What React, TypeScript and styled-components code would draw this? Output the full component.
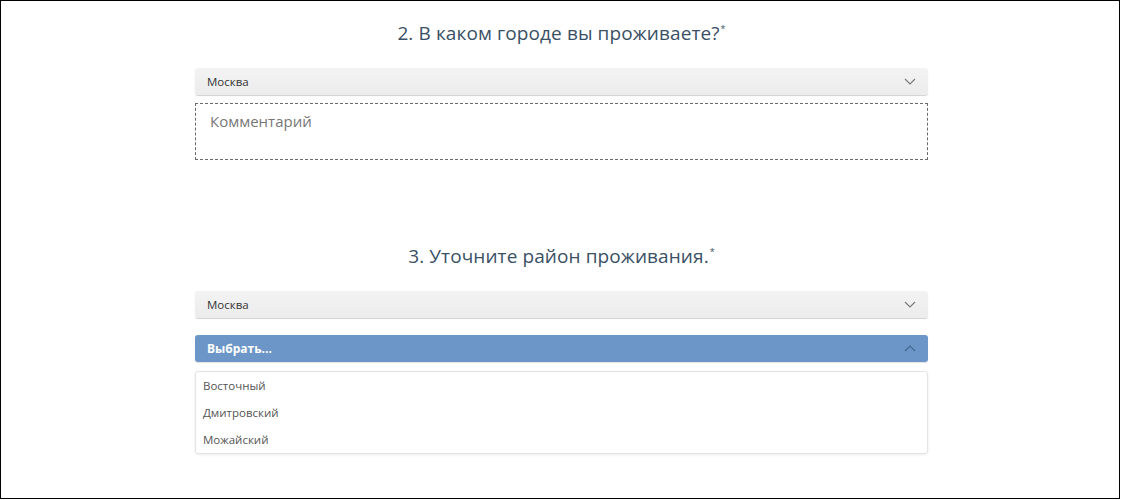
import React from "react";
import styled, { createGlobalStyle } from "styled-components";

const Global = createGlobalStyle`
  html, body { margin: 0; padding: 0; background: #fff; }
  body { font-family: "Open Sans", "Noto Sans", sans-serif; }
`;

const Frame = styled.div`
  box-sizing: border-box;
  width: 1120px;
  height: 499px;
  border: 1px solid #000;
  background: #fff;
  display: flex;
  padding-left: 194px;
  overflow: hidden;
`;

const Column = styled.div`
  width: 733px;
  display: flex;
  flex-direction: column;
  padding-top: 20px;
`;

const Question = styled.h2<{ $top?: number; $bottom?: number }>`
  margin: ${(p) => p.$top ?? 0}px 0 ${(p) => p.$bottom ?? 23}px;
  font-family: "Open Sans", "Noto Sans", sans-serif;
  font-weight: 400;
  font-size: 19px;
  line-height: 24px;
  color: #3a5064;
  text-align: center;
  letter-spacing: 0.1px;
`;

const Star = styled.sup`
  font-size: 9px;
  position: relative;
  top: -4px;
  margin-left: 1px;
  vertical-align: top;
`;

const SelectBox = styled.div<{ $active?: boolean }>`
  box-sizing: border-box;
  height: 27px;
  display: flex;
  align-items: center;
  justify-content: space-between;
  padding: 0 12px;
  border-radius: 3px;
  font-size: ${(p) => (p.$active ? "12px" : "11.5px")};
  background: ${(p) => (p.$active ? "#6b96c7" : "linear-gradient(#f3f3f3, #ececec)")};
  color: ${(p) => (p.$active ? "#fff" : "#333")};
  font-weight: ${(p) => (p.$active ? 700 : 400)};
  box-shadow: ${(p) =>
    p.$active ? "0 1px 1px rgba(0,0,0,0.12)" : "0 1px 1px rgba(0,0,0,0.18)"};
`;

const Comment = styled.div`
  box-sizing: border-box;
  margin-top: 8px;
  height: 57px;
  border: 1px dashed #6a6a6a;
  padding: 7px 14px;
  font-size: 15px;
  color: #777;
`;

const Gap = styled.div<{ $h: number }>`
  height: ${(p) => p.$h}px;
`;

const List = styled.div`
  margin-top: 9px;
  box-sizing: border-box;
  border: 1px solid #e3e3e3;
  border-radius: 3px;
  box-shadow: 0 1px 3px rgba(0,0,0,0.08);
  padding: 0;
`;

const Item = styled.div`
  height: 27px;
  line-height: 27px;
  padding: 0 7px;
  font-size: 11.5px;
  color: #555;
`;

const Chevron = ({ up, color }: { up?: boolean; color: string }) => (
  <svg width="12" height="7" viewBox="0 0 12 7">
    <path
      d={up ? "M1 6 L6 1 L11 6" : "M1 1 L6 6 L11 1"}
      fill="none"
      stroke={color}
      strokeWidth="1.1"
    />
  </svg>
);

export default function App() {
  return (
    <>
      <Global />
      <Frame>
        <Column>
          <Question>
            2. В каком городе вы проживаете?<Star>*</Star>
          </Question>
          <SelectBox>
            <span>Москва</span>
            <Chevron color="#777" />
          </SelectBox>
          <Comment>Комментарий</Comment>
          <Question $top={84} $bottom={23}>
            3. Уточните район проживания.<Star>*</Star>
          </Question>
          <SelectBox>
            <span>Москва</span>
            <Chevron color="#777" />
          </SelectBox>
          <Gap $h={17} />
          <SelectBox $active>
            <span>Выбрать...</span>
            <Chevron up color="#44678f" />
          </SelectBox>
          <List>
            <Item>Восточный</Item>
            <Item>Дмитровский</Item>
            <Item>Можайский</Item>
          </List>
        </Column>
      </Frame>
    </>
  );
}
